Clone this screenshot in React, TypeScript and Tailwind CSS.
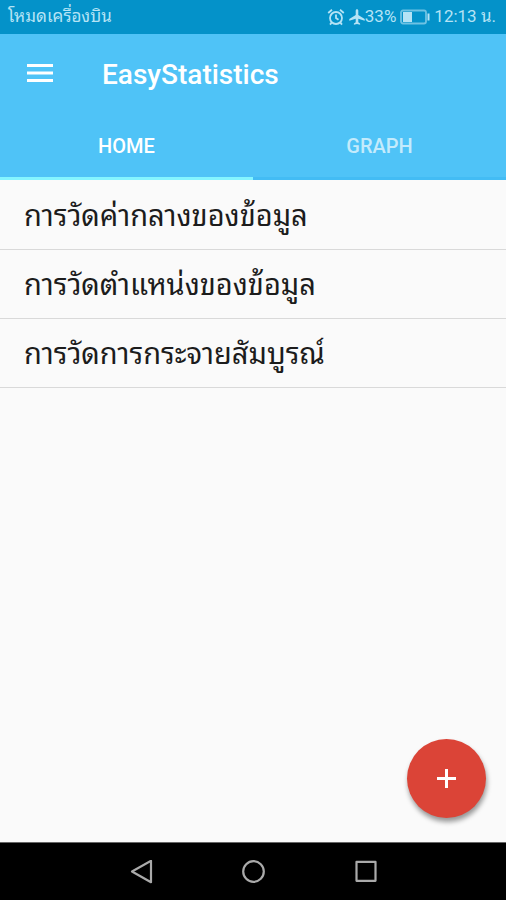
import { useState } from "react";

const tabs = ["HOME", "GRAPH"];

const topics = [
  "การวัดค่ากลางของข้อมูล",
  "การวัดตำแหน่งของข้อมูล",
  "การวัดการกระจายสัมบูรณ์",
];

function StatusBar() {
  return (
    <div className="flex h-[34px] items-center justify-between bg-[#0492c9] pr-2.5 pl-2 text-[17px] text-[#b5e3f5]">
      <span>โหมดเครื่องบิน</span>
      <div className="flex items-center gap-1">
        <svg
          className="size-[18px]"
          viewBox="0 0 18 18"
          fill="none"
          stroke="currentColor"
          strokeWidth="1.8"
        >
          <circle cx="9" cy="10" r="6" />
          <path d="M9 6.5V10l2.5 1.8M1.2 5 5 1.8M16.8 5 13 1.8M4.8 14.4 3 16.6M13.2 14.4l1.8 2.2" />
        </svg>
        <svg className="size-4" viewBox="0 0 16 16" fill="currentColor">
          <path d="M8 .3c-.9 0-1.3.7-1.3 1.5v4.3L.3 10v1.7l6.4-1.9v3.4L4.9 14.6v1.2L8 15l3.1.8v-1.2l-1.8-1.4V9.8l6.4 1.9V10L9.3 6.1V1.8C9.3 1 8.9.3 8 .3z" />
        </svg>
        <span className="-ml-1">33%</span>
        <svg className="h-4 w-[30px]" viewBox="0 0 30 16" fill="none">
          <rect
            x="1"
            y="1.5"
            width="25"
            height="13"
            rx="2"
            stroke="currentColor"
            strokeOpacity="0.6"
            strokeWidth="1.8"
          />
          <rect x="3" y="3" width="9" height="10" fill="currentColor" />
          <path d="M28.5 4.5v7" stroke="currentColor" strokeWidth="2" />
        </svg>
        <span>12:13 น.</span>
      </div>
    </div>
  );
}

function Toolbar() {
  return (
    <div className="flex h-20 items-center gap-12 px-6 pt-0.5 text-white">
      <button type="button" aria-label="Menu">
        <svg className="size-8" viewBox="0 0 32 32" fill="currentColor">
          <path d="M3 5h26v3H3zM3 12.500h26v3H3zM3 20h26v3H3z" />
        </svg>
      </button>
      <h1 className="-ml-0.5 text-[28px] font-medium">EasyStatistics</h1>
    </div>
  );
}

function AddButton() {
  return (
    <button
      type="button"
      aria-label="Add"
      className="absolute right-5 bottom-6 flex size-[79px] items-center justify-center rounded-full bg-[#db4437] text-white shadow-[1px_4px_5px_rgba(0,0,0,0.4)]"
    >
      <svg
        className="size-5"
        viewBox="0 0 20 20"
        stroke="currentColor"
        strokeWidth="3"
      >
        <path d="M9.5 0v19M0 9.5h19" />
      </svg>
    </button>
  );
}

function NavigationBar() {
  return (
    <nav className="flex h-[58px] justify-center border-t border-[#666] bg-black text-[#aaa]">
      <button
        type="button"
        aria-label="Back"
        className="flex w-28 items-center justify-center"
      >
        <svg
          className="size-6"
          viewBox="0 0 24 24"
          fill="none"
          stroke="currentColor"
          strokeWidth="2.2"
          strokeLinejoin="round"
        >
          <path d="M3 11.500 22 .8v21.400z" />
        </svg>
      </button>
      <button
        type="button"
        aria-label="Home"
        className="flex w-28 items-center justify-center"
      >
        <svg
          className="size-6"
          viewBox="0 0 24 24"
          fill="none"
          stroke="currentColor"
          strokeWidth="2.2"
        >
          <circle cx="12.5" cy="11.500" r="10.300" />
        </svg>
      </button>
      <button
        type="button"
        aria-label="Recent apps"
        className="flex w-28 items-center justify-center"
      >
        <svg
          className="size-6"
          viewBox="0 0 24 24"
          fill="none"
          stroke="currentColor"
          strokeWidth="2.2"
          strokeLinejoin="round"
        >
          <rect x="3.500" y="1.800" width="19" height="19" />
        </svg>
      </button>
    </nav>
  );
}

export default function App() {
  const [activeTab, setActiveTab] = useState("HOME");

  return (
    <div
      lang="th"
      className="flex min-h-screen flex-col bg-[#fafafa] font-[Roboto,'Noto_Sans_Thai_Looped','Droid_Sans_Thai',Loma,Waree,'Noto_Sans',sans-serif]"
    >
      <StatusBar />
      <header className="bg-[#4fc3f7]">
        <Toolbar />
        <div className="flex h-[66px]" role="tablist">
          {tabs.map((tab) => (
            <button
              key={tab}
              type="button"
              role="tab"
              aria-selected={tab === activeTab}
              onClick={() => setActiveTab(tab)}
              className={
                tab === activeTab
                  ? "flex-1 border-b-3 border-[#84f5ff] text-xl font-medium text-white"
                  : "flex-1 border-b-3 border-[#43bcf4] text-xl font-medium text-[#c4ebfc]"
              }
            >
              {tab}
            </button>
          ))}
        </div>
      </header>
      <main className="relative flex-1">
        <ul className="pt-px">
          {topics.map((topic) => (
            <li
              key={topic}
              className="flex h-[69px] items-center border-b border-[#d9d9d9] px-6 pt-1 text-[29px] text-[#1c1c1c]"
            >
              {topic}
            </li>
          ))}
        </ul>
        <AddButton />
      </main>
      <NavigationBar />
    </div>
  );
}
